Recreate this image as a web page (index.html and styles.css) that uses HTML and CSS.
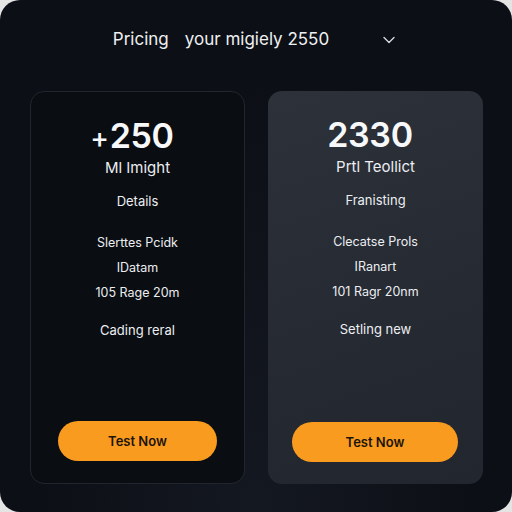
FILE: index.html
```html
<!DOCTYPE html>
<html lang="en">
<head>
<meta charset="utf-8">
<title>Pricing</title>
<link rel="stylesheet" href="styles.css">
</head>
<body>
<div class="frame">
  <header class="header">
    <h1 class="title"><span class="title-lead">Pricing</span><span>your migiely 2550</span></h1>
    <svg class="chevron" width="12" height="8" viewBox="0 0 12 8" aria-hidden="true"><polyline points="1,1.5 6,6.5 11,1.5" fill="none" stroke="#d6d8dc" stroke-width="1.4" stroke-linecap="round" stroke-linejoin="round"/></svg>
  </header>
  <main class="plans">
    <section class="card card-dark">
      <div class="price price-shift"><span class="plus">+</span>250</div>
      <div class="plan-name">Ml Imight</div>
      <div class="plan-label">Details</div>
      <ul class="features">
        <li>Slerttes Pcidk</li>
        <li>IDatam</li>
        <li>105 Rage 20m</li>
      </ul>
      <div class="plan-note">Cading reral</div>
      <button class="btn">Test Now</button>
    </section>
    <section class="card card-light">
      <div class="price price-shift">2330</div>
      <div class="plan-name">Prtl Teollict</div>
      <div class="plan-label">Franisting</div>
      <ul class="features">
        <li>Clecatse Prols</li>
        <li>IRanart</li>
        <li>101 Ragr 20nm</li>
      </ul>
      <div class="plan-note">Setling new</div>
      <button class="btn">Test Now</button>
    </section>
  </main>
</div>
</body>
</html>
```
FILE: styles.css
```css
* { box-sizing: border-box; }
html, body { margin: 0; padding: 0; }
body {
  background: #e4e4e4;
  font-family: Inter, "Noto Sans", "Liberation Sans", sans-serif;
  width: 512px;
  height: 512px;
  overflow: hidden;
}
.frame {
  width: 512px;
  height: 512px;
  border-radius: 20px;
  background: radial-gradient(ellipse at 50% 100%, #141821 0%, #0c0f15 60%);
  display: flex;
  flex-direction: column;
  padding: 0 30px 28px;
}
.header {
  display: flex;
  align-items: center;
  justify-content: center;
  gap: 54px;
  padding-top: 27px;
  padding-right: 4px;
  height: 51px;
  margin-bottom: 40px;
}
.title {
  margin: 0;
  font-size: 17px;
  line-height: 24px;
  font-weight: 400;
  color: #eef0f2;
  white-space: nowrap;
}
.title-lead { margin-right: 16px; }
.chevron { display: block; margin-top: 1px; }
.plans {
  flex: 1;
  display: grid;
  grid-template-columns: 215px 215px;
  gap: 23px;
}
.card {
  border-radius: 14px;
  display: flex;
  flex-direction: column;
  align-items: center;
  text-align: center;
  color: #eceef1;
  padding: 22px 0 22px;
}
.card-dark {
  background: #0a0d12;
  border: 1px solid #21262e;
}
.card-light {
  background: linear-gradient(160deg, #2c313a 0%, #252a33 55%, #22262e 100%);
  padding-top: 22px;
}
.price {
  font-size: 34px;
  line-height: 44px;
  font-weight: 600;
  letter-spacing: -0.3px;
  color: #f7f8fa;
}
.plus { font-size: 28px; line-height: 1; font-weight: 500; margin-right: 1px; }
.price-shift { margin-right: 11px; }
.plan-name {
  font-size: 15px;
  line-height: 20px;
  margin-top: 0;
}
.plan-label {
  font-size: 13px;
  line-height: 18px;
  margin-top: 14px;
}
.features {
  list-style: none;
  margin: 24px 0 0;
  padding: 0;
  display: flex;
  flex-direction: column;
  gap: 7px;
  font-size: 12.5px;
  line-height: 18px;
}
.plan-note {
  font-size: 13px;
  line-height: 18px;
  margin-top: 19px;
}
.btn {
  margin-top: auto;
  align-self: stretch;
  height: 40px;
  border: none;
  border-radius: 20px;
  background: #f89b1f;
  color: #1c1409;
  font-family: inherit;
  font-size: 13px;
  font-weight: 600;
}
.card-dark .btn { margin-left: 27px; margin-right: 27px; }
.card-light .btn { margin-left: 24px; margin-right: 25px; }
```
